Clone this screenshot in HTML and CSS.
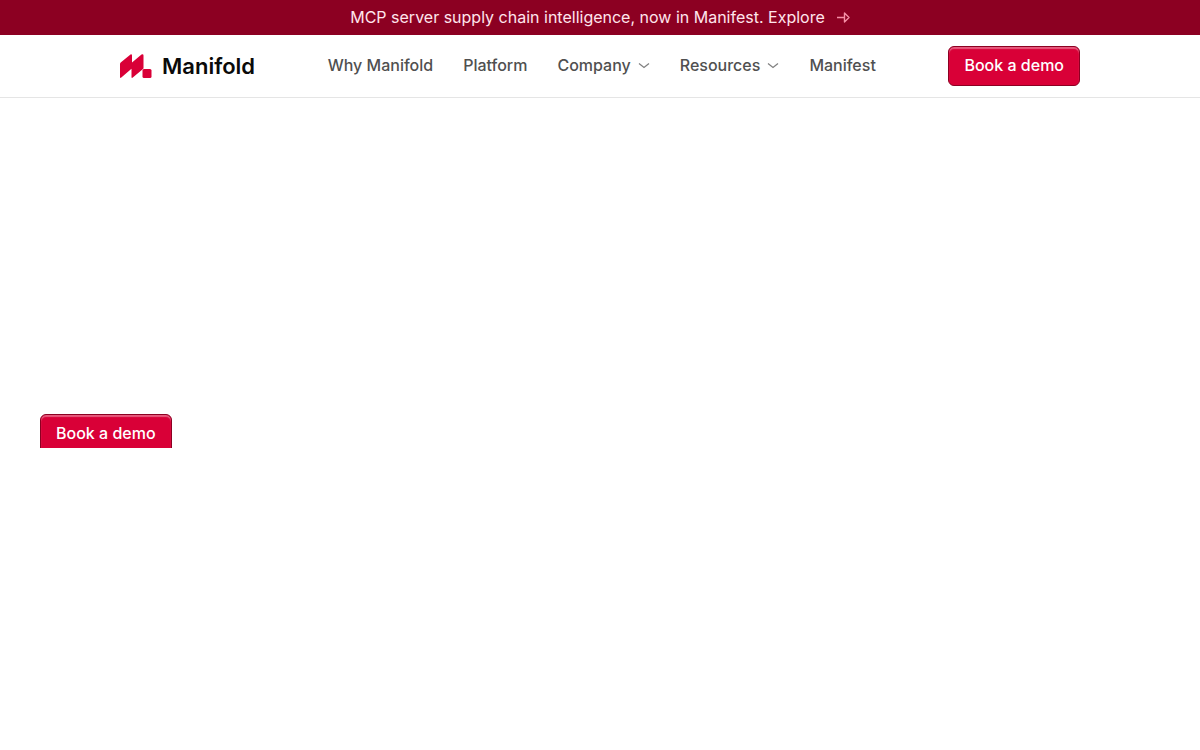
FILE: index.html
```html
<!DOCTYPE html>
<html lang="en">
<head>
    <meta charset="utf-8">
    <meta name="viewport" content="width=device-width, initial-scale=1">
    <title>Manifold</title>
    <link rel="stylesheet" href="styles.css">
</head>
<body>
    <a href="#manifest" class="banner">
        <span>MCP server supply chain intelligence, now in Manifest. Explore</span>
        <svg class="banner-arrow" width="14" height="12" viewBox="0 0 14 12" fill="none" stroke="currentColor" stroke-width="1.4" stroke-linejoin="round" aria-hidden="true">
            <path d="M1 6.500h7.500M8.500 2v9L13 6.500z"/>
        </svg>
    </a>

    <header class="header">
        <a href="#" class="logo">
            <svg width="32" height="24" viewBox="0 0 32 24" fill="#d90037" aria-hidden="true">
                <path d="M0 10Q0 9 .7 8.400L10.500.4Q12 0 12 1.500V8.500L21.500.4Q23.500-.4 23.500 1.500V14Q23.500 14.700 22.700 15.200L12.800 23.600Q11.500 24.400 11.500 23V14.800L1.300 23.600Q0 24.400 0 23z"/>
                <rect x="22.500" y="15" width="9" height="9" rx="1.500"/>
            </svg>
            <span>Manifold</span>
        </a>
        <nav class="nav">
            <a href="#why">Why Manifold</a>
            <a href="#platform">Platform</a>
            <button type="button" class="nav-toggle">
                Company
                <svg width="12" height="8" viewBox="0 0 12 8" fill="none" stroke="currentColor" stroke-width="1.300" aria-hidden="true"><path d="M1 2.500l5 4 5-4"/></svg>
            </button>
            <button type="button" class="nav-toggle">
                Resources
                <svg width="12" height="8" viewBox="0 0 12 8" fill="none" stroke="currentColor" stroke-width="1.300" aria-hidden="true"><path d="M1 2.500l5 4 5-4"/></svg>
            </button>
            <a href="#manifest">Manifest</a>
        </nav>
        <a href="#demo" class="btn">Book a demo</a>
    </header>

    <main>
        <section class="hero">
            <a href="#demo" class="btn">Book a demo</a>
        </section>
    </main>
</body>
</html>
```

FILE: styles.css
```css
* {
    box-sizing: border-box;
}
body {
    margin: 0;
    background-color: #fff;
    color: #505050;
    font-family: Inter, "Liberation Sans", sans-serif;
    font-size: 16px;
    line-height: 20px;
}
a {
    color: inherit;
    text-decoration: none;
}
.banner {
    display: flex;
    align-items: center;
    justify-content: center;
    gap: 11px;
    padding: 7px 20px 8px;
    background-color: #8c0022;
    color: #ffe5ec;
}
.banner-arrow {
    color: #f58fa6;
}
.header {
    display: flex;
    align-items: center;
    justify-content: space-between;
    padding: 11px 10%;
    border-bottom: 1px solid #e5e5e5;
}
.logo {
    display: flex;
    align-items: center;
    gap: 10px;
    color: #0a0a0a;
    font-size: 22px;
    font-weight: 600;
}
.nav {
    display: flex;
    align-items: center;
    gap: 30px;
    padding-bottom: 2px;
    font-weight: 500;
}
.nav-toggle {
    display: flex;
    align-items: center;
    gap: 7px;
    padding: 0;
    border: 0;
    background: none;
    color: inherit;
    font: inherit;
    cursor: pointer;
}
.nav-toggle svg {
    color: #808080;
}
.btn {
    display: inline-block;
    padding: 8px 15px 10px;
    border: 1px solid #8c0022;
    border-radius: 6px;
    background-color: #d90037;
    box-shadow: inset 0 2px 1px rgba(255, 255, 255, 0.35);
    color: #fff;
    font-weight: 500;
}
.hero {
    height: 350px;
    padding: 316px 40px 0;
    overflow: hidden;
}
```
